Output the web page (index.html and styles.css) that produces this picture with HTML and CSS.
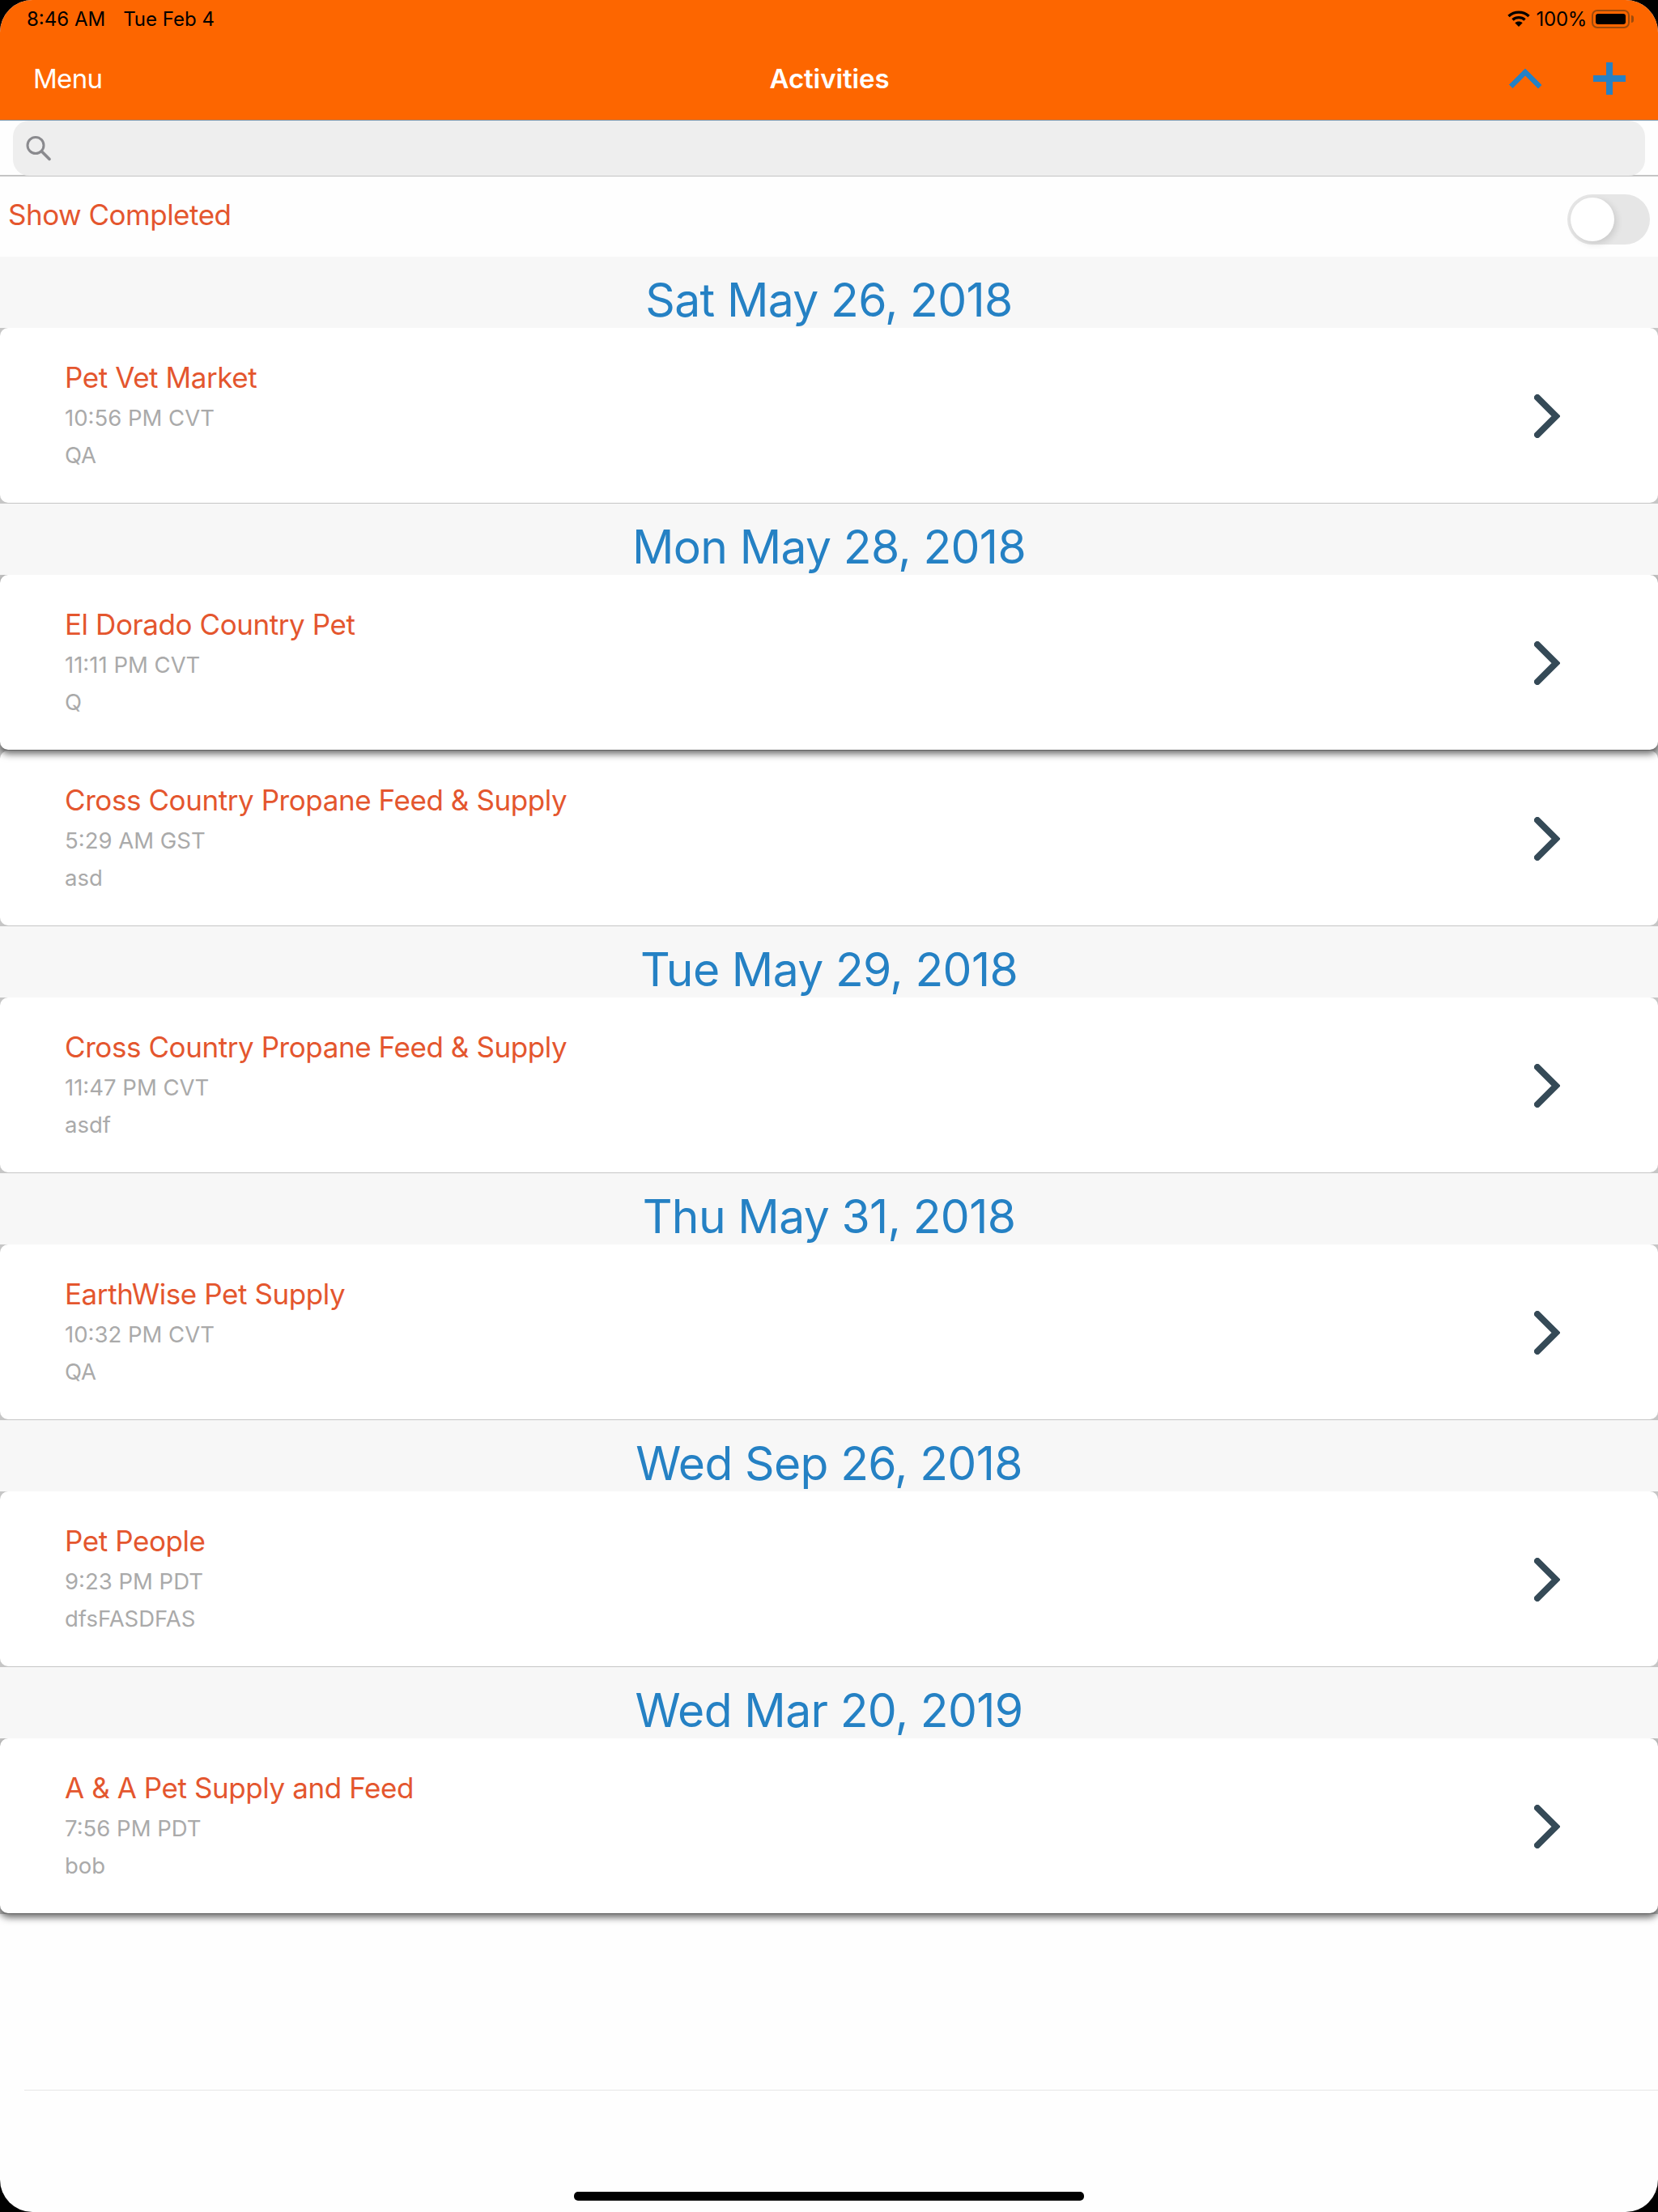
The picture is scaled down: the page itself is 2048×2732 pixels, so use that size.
FILE: index.html
```html
<!DOCTYPE html>
<html lang="en">
<head>
    <meta charset="UTF-8">
    <title>Activities</title>
    <link rel="stylesheet" href="styles.css">
</head>
<body>
<div class="screen">
    <header class="topbar">
        <div class="status">
            <span class="status-left"><span>8:46 AM</span><span>Tue Feb 4</span></span>
            <span class="status-right">
                <svg class="wifi" width="28" height="20" viewBox="0 0 28 20">
                    <path d="M1.5 7 C8.5 0.5 19.5 0.5 26.5 7" fill="none" stroke="#000" stroke-width="3.4"/>
                    <path d="M6.5 11.5 C10.5 7.7 17.5 7.7 21.5 11.5" fill="none" stroke="#000" stroke-width="3.4"/>
                    <path d="M14 20 L9.3 15.2 C11.8 12.9 16.2 12.9 18.7 15.2 Z" fill="#000"/>
                </svg>
                <span class="battery-text">100%</span>
                <span class="battery"><span class="battery-fill"></span></span>
                <span class="battery-nub"></span>
            </span>
        </div>
        <div class="navbar">
            <span class="nav-menu">Menu</span>
            <span class="nav-title">Activities</span>
            <span class="nav-actions">
                <svg width="40" height="24" viewBox="0 0 40 24" shape-rendering="crispEdges">
                    <path d="M2 22 L20 4 L38 22" fill="none" stroke="#2681c4" stroke-width="6.5"/>
                </svg>
                <svg width="40" height="40" viewBox="0 0 40 40" shape-rendering="crispEdges">
                    <path d="M16 0 H24 V16 H40 V24 H24 V40 H16 V24 H0 V16 H16 Z" fill="#2681c4"/>
                </svg>
            </span>
        </div>
    </header>

    <div class="searchbar">
        <div class="search-input">
            <svg width="32" height="32" viewBox="0 0 32 32">
                <circle cx="12" cy="12.5" r="10" fill="none" stroke="#8a8a8e" stroke-width="3"/>
                <path d="M19.5 20 L29 29.5" fill="none" stroke="#8a8a8e" stroke-width="3.6" stroke-linecap="round"/>
            </svg>
        </div>
    </div>

    <div class="filter-row">
        <span class="filter-label">Show Completed</span>
        <span class="toggle"><span class="toggle-knob"></span></span>
    </div>

    <div class="date-head">Sat May 26, 2018</div>
    <div class="row">
        <div class="card">
            <div class="info">
                <div class="name">Pet Vet Market</div>
                <div class="time">10:56 PM CVT</div>
                <div class="note">QA</div>
            </div>
            <svg class="chev" width="32" height="54" viewBox="0 0 32 54"><path d="M4 4 L27 27 L4 50" fill="none" stroke="#354a57" stroke-width="8" stroke-linecap="round"/></svg>
        </div>
    </div>

    <div class="date-head">Mon May 28, 2018</div>
    <div class="row row-raised">
        <div class="card">
            <div class="info">
                <div class="name">El Dorado Country Pet</div>
                <div class="time">11:11 PM CVT</div>
                <div class="note">Q</div>
            </div>
            <svg class="chev" width="32" height="54" viewBox="0 0 32 54"><path d="M4 4 L27 27 L4 50" fill="none" stroke="#354a57" stroke-width="8" stroke-linecap="round"/></svg>
        </div>
    </div>
    <div class="row">
        <div class="card">
            <div class="info">
                <div class="name">Cross Country Propane Feed &amp; Supply</div>
                <div class="time">5:29 AM GST</div>
                <div class="note">asd</div>
            </div>
            <svg class="chev" width="32" height="54" viewBox="0 0 32 54"><path d="M4 4 L27 27 L4 50" fill="none" stroke="#354a57" stroke-width="8" stroke-linecap="round"/></svg>
        </div>
    </div>

    <div class="date-head">Tue May 29, 2018</div>
    <div class="row">
        <div class="card">
            <div class="info">
                <div class="name">Cross Country Propane Feed &amp; Supply</div>
                <div class="time">11:47 PM CVT</div>
                <div class="note">asdf</div>
            </div>
            <svg class="chev" width="32" height="54" viewBox="0 0 32 54"><path d="M4 4 L27 27 L4 50" fill="none" stroke="#354a57" stroke-width="8" stroke-linecap="round"/></svg>
        </div>
    </div>

    <div class="date-head">Thu May 31, 2018</div>
    <div class="row">
        <div class="card">
            <div class="info">
                <div class="name">EarthWise Pet Supply</div>
                <div class="time">10:32 PM CVT</div>
                <div class="note">QA</div>
            </div>
            <svg class="chev" width="32" height="54" viewBox="0 0 32 54"><path d="M4 4 L27 27 L4 50" fill="none" stroke="#354a57" stroke-width="8" stroke-linecap="round"/></svg>
        </div>
    </div>

    <div class="date-head">Wed Sep 26, 2018</div>
    <div class="row">
        <div class="card">
            <div class="info">
                <div class="name">Pet People</div>
                <div class="time">9:23 PM PDT</div>
                <div class="note">dfsFASDFAS</div>
            </div>
            <svg class="chev" width="32" height="54" viewBox="0 0 32 54"><path d="M4 4 L27 27 L4 50" fill="none" stroke="#354a57" stroke-width="8" stroke-linecap="round"/></svg>
        </div>
    </div>

    <div class="date-head">Wed Mar 20, 2019</div>
    <div class="row row-raised">
        <div class="card">
            <div class="info">
                <div class="name">A &amp; A Pet Supply and Feed</div>
                <div class="time">7:56 PM PDT</div>
                <div class="note">bob</div>
            </div>
            <svg class="chev" width="32" height="54" viewBox="0 0 32 54"><path d="M4 4 L27 27 L4 50" fill="none" stroke="#354a57" stroke-width="8" stroke-linecap="round"/></svg>
        </div>
    </div>

    <div class="list-end"></div>
    <div class="home-bar"></div>
</div>
</body>
</html>
```

FILE: styles.css
```css
* {
    box-sizing: border-box;
}
html, body {
    margin: 0;
    padding: 0;
    background-color: #000;
}
.screen {
    width: 2048px;
    height: 2732px;
    overflow: hidden;
    border-radius: 40px;
    background-color: #fefefe;
    font-family: Inter, "Liberation Sans", sans-serif;
}

/* orange header */
.topbar {
    height: 149px;
    background-color: #fd6600;
    border-bottom: 1px solid #7d97ac;
}
.status {
    height: 46px;
    display: flex;
    justify-content: space-between;
    align-items: center;
    padding: 0 30px 0 33px;
    color: #000;
    font-size: 24px;
}
.status-left {
    display: flex;
    gap: 22px;
}
.status-right {
    display: flex;
    align-items: center;
}
.battery-text {
    margin-left: 8px;
    letter-spacing: -0.3px;
}
.battery {
    width: 47px;
    height: 23px;
    margin-left: 6px;
    padding: 3px;
    border: 2px solid #9c4b0c;
    border-radius: 7px;
}
.battery-fill {
    display: block;
    height: 100%;
    background-color: #000;
    border-radius: 3px;
}
.battery-nub {
    width: 3px;
    height: 9px;
    margin-left: 2px;
    background-color: #9c4b0c;
    border-radius: 0 3px 3px 0;
}
.navbar {
    height: 102px;
    display: grid;
    grid-template-columns: 1fr auto 1fr;
    align-items: center;
    padding: 0 40px 0 41px;
    color: #fff;
}
.nav-menu {
    font-size: 33px;
    letter-spacing: -0.7px;
}
.nav-title {
    font-size: 33px;
    font-weight: 600;
    letter-spacing: -0.1px;
}
.nav-actions {
    display: flex;
    justify-content: flex-end;
    align-items: center;
    gap: 64px;
}

/* search */
.searchbar {
    height: 69px;
    padding: 0 16px;
    border-bottom: 2px solid #c4c4c4;
}
.search-input {
    height: 68px;
    display: flex;
    align-items: center;
    padding: 0 0 0 16px;
    background-color: #eee;
    border-radius: 20px;
}

/* show completed */
.filter-row {
    height: 99px;
    display: flex;
    justify-content: space-between;
    align-items: center;
    padding: 0 10px 0 10px;
}
.filter-label {
    margin-bottom: 6px;
    color: #e4562e;
    font-size: 35px;
    letter-spacing: -0.5px;
}
.toggle {
    width: 102px;
    height: 62px;
    padding: 4px;
    margin-top: 7px;
    background-color: #e6e6e6;
    border-radius: 31px;
}
.toggle-knob {
    display: block;
    width: 54px;
    height: 54px;
    background-color: #fff;
    border-radius: 50%;
    box-shadow: 3px 3px 8px rgba(0, 0, 0, 0.12);
}

/* list */
.date-head {
    height: 88px;
    padding-top: 19px;
    background-color: #f7f7f7;
    color: #2581c4;
    font-size: 57px;
    line-height: 70px;
    letter-spacing: -0.65px;
    text-align: center;
}
.row {
    height: 217px;
    padding-bottom: 1px;
    background-color: #c6c6c6;
}
.row-raised {
    position: relative;
    z-index: 1;
    clip-path: inset(0 0 -30px 0);
}
.row-raised .card {
    box-shadow: 0 5px 10px rgba(0, 0, 0, 0.6);
}
.card {
    height: 216px;
    display: flex;
    justify-content: space-between;
    align-items: center;
    padding: 0 121px 0 80px;
    background-color: #fff;
    border-radius: 10px;
}
.name {
    color: #e4562e;
    font-size: 35px;
    line-height: 53px;
    letter-spacing: -0.42px;
}
.time, .note {
    color: #aaa;
    font-size: 27.5px;
    line-height: 46px;
}
.info {
    margin-top: -2px;
}
.chev {
    margin-top: 2px;
}
.list-end {
    height: 1px;
    margin: 217px 0 0 30px;
    background-color: #e6e6e6;
}
.home-bar {
    width: 630px;
    height: 11px;
    margin: 125px auto 0;
    background-color: #000;
    border-radius: 5px;
}
```
